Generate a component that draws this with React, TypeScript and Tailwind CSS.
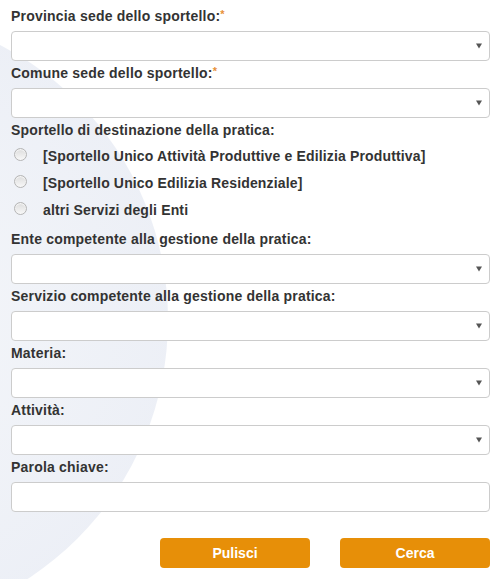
import React from "react";

const FONT = { fontFamily: '"Liberation Sans", Arial, sans-serif' };

function Label({ text, required = false }: { text: string; required?: boolean }) {
  return (
    <label className="block h-5 leading-5 mb-[5px] text-[14px] font-bold tracking-[0.2px] text-[#333]">
      {text}
      {required && <span className="text-[#e8913a] text-[11px] align-top leading-4">*</span>}
    </label>
  );
}

function SelectBox() {
  return (
    <div className="relative mb-[2px]">
      <select className="block w-full h-[30px] appearance-none rounded-[4px] border border-[#cccccc] bg-white px-2 text-[14px] outline-none" />
      {/* caret */}
      <svg
        className="pointer-events-none absolute right-[8px] top-[12px]"
        width="6"
        height="6"
        viewBox="0 0 6 6"
      >
        <path d="M0 0.5h6L3 5.5z" fill="#555" />
      </svg>
    </div>
  );
}

function Field({ label, required }: { label: string; required?: boolean }) {
  return (
    <div>
      <Label text={label} required={required} />
      <SelectBox />
    </div>
  );
}

function Radio({ text }: { text: string }) {
  return (
    <label className="flex items-center h-[27px] text-[14px] font-bold tracking-[0.15px] text-[#333]">
      <span className="ml-[3px] mr-[16px] -mt-[4px] inline-block h-[13px] w-[13px] rounded-full border border-[#b5b5b5] bg-[linear-gradient(180deg,#dcdcdc,#f8f8f8)] shadow-[inset_0_1px_1px_rgba(255,255,255,0.8)]" />
      {text}
    </label>
  );
}

export default function App() {
  return (
    <div className="relative h-[579px] w-[502px] overflow-hidden bg-white" style={FONT}>
      {/* decorative background sphere */}
      <div className="absolute left-[-450px] top-[11px] h-[618px] w-[618px] rounded-full bg-[radial-gradient(circle,#f5f7fa_0%,#eceff6_75%,#e0e6f1_96%,rgba(255,255,255,0)_100%)]" />

      <form className="relative pl-[11px] pr-[12px] pt-[6px]">
        <Field label="Provincia sede dello sportello:" required />
        <Field label="Comune sede dello sportello:" required />

        <div className="h-5 leading-5 text-[14px] font-bold tracking-[0.2px] text-[#333]">
          Sportello di destinazione della pratica:
        </div>
        <div className="mt-[3px] mb-[5px]">
          <Radio text="[Sportello Unico Attività Produttive e Edilizia Produttiva]" />
          <Radio text="[Sportello Unico Edilizia Residenziale]" />
          <Radio text="altri Servizi degli Enti" />
        </div>

        <Field label="Ente competente alla gestione della pratica:" />
        <Field label="Servizio competente alla gestione della pratica:" />
        <Field label="Materia:" />
        <Field label="Attività:" />

        <Label text="Parola chiave:" />
        <input
          type="text"
          className="block w-full h-[30px] rounded-[4px] border border-[#cccccc] bg-white px-2 text-[14px] outline-none"
        />

        <div className="mt-[26px] flex justify-end gap-[30px]">
          <button
            type="button"
            className="h-[30px] w-[150px] rounded-[4px] bg-[#e78f08] text-[14px] font-bold text-white"
          >
            Pulisci
          </button>
          <button
            type="button"
            className="h-[30px] w-[150px] rounded-[4px] bg-[#e78f08] text-[14px] font-bold text-white"
          >
            Cerca
          </button>
        </div>
      </form>
    </div>
  );
}
